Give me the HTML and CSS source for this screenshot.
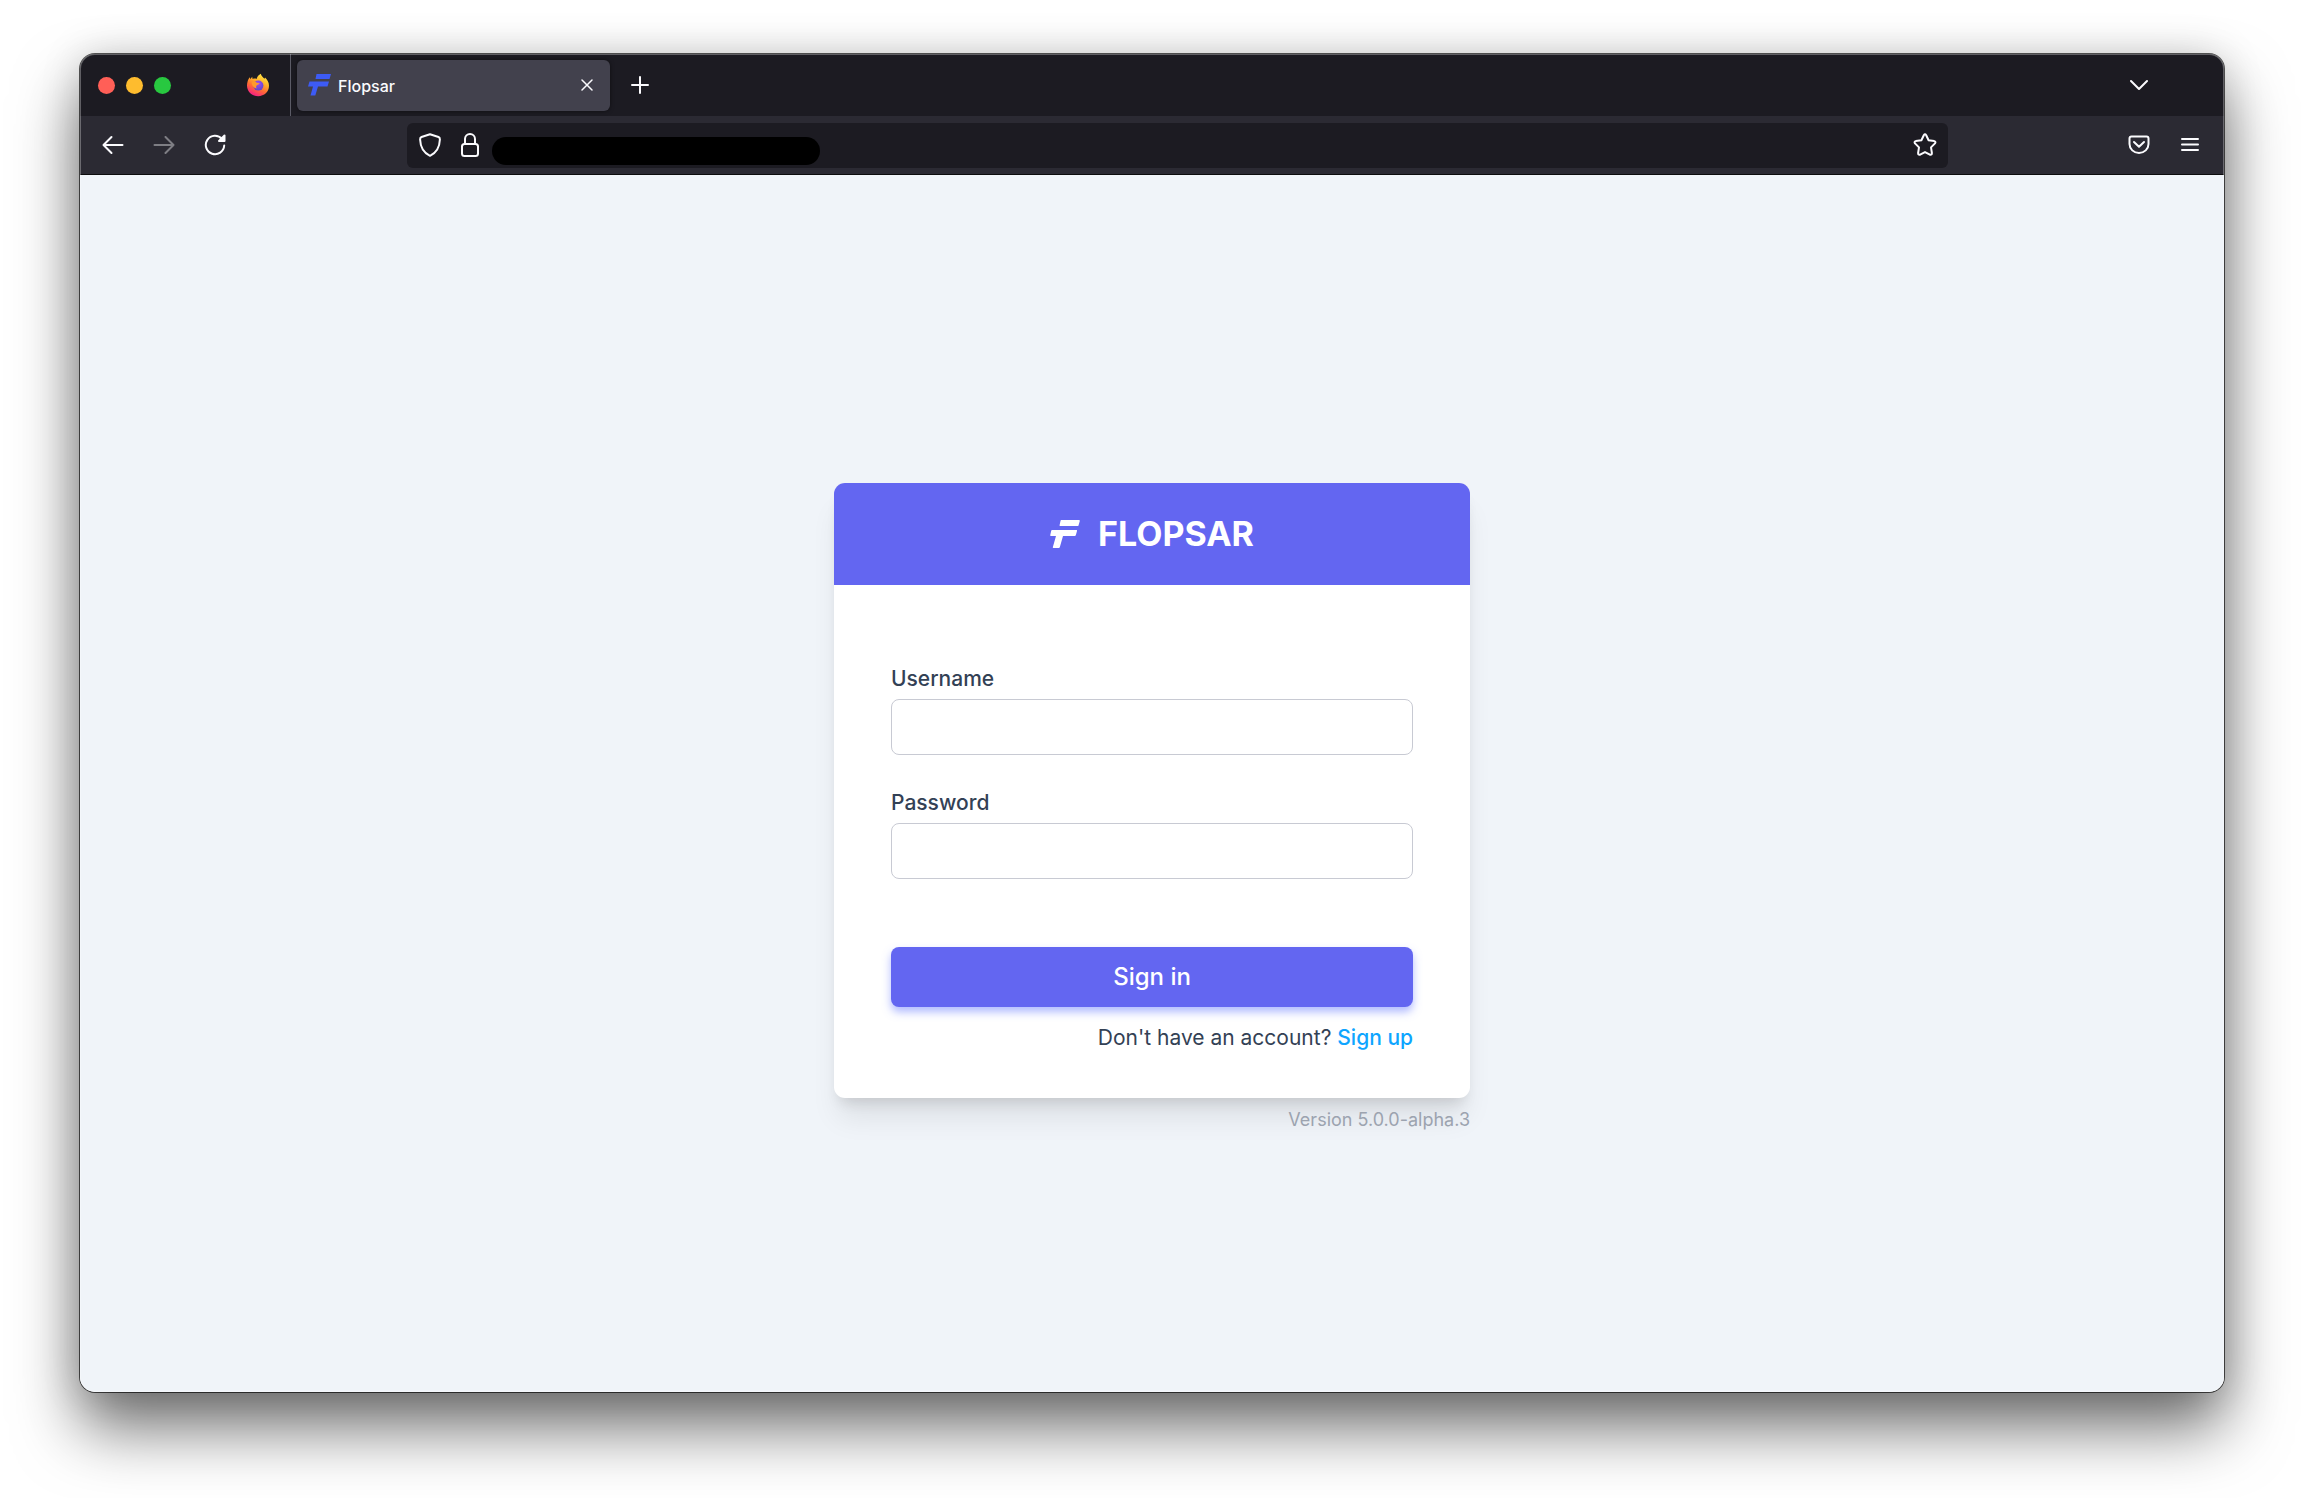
FILE: index.html
```html
<!DOCTYPE html>
<html lang="en">
<head>
<meta charset="utf-8">
<meta name="viewport" content="width=device-width, initial-scale=1">
<title>Flopsar</title>
<link rel="stylesheet" href="styles.css">
</head>
<body>
<div class="window">
  <header class="tabbar">
    <div class="lights">
      <button class="light light-close" aria-label="Close window"></button>
      <button class="light light-min" aria-label="Minimize window"></button>
      <button class="light light-zoom" aria-label="Zoom window"></button>
    </div>
    <button class="icon-button pinned" aria-label="Firefox View">
      <svg width="24" height="24" viewBox="0 0 24 24">
        <defs>
          <linearGradient id="flame" x1="0.8" y1="0" x2="0.3" y2="1">
            <stop offset="0" stop-color="#fff04a"/>
            <stop offset="0.35" stop-color="#ffb529"/>
            <stop offset="0.65" stop-color="#ff6a35"/>
            <stop offset="1" stop-color="#f5198a"/>
          </linearGradient>
          <radialGradient id="globe" cx="0.5" cy="0.3" r="0.7">
            <stop offset="0" stop-color="#a04cf0"/>
            <stop offset="1" stop-color="#5b46c9"/>
          </radialGradient>
        </defs>
        <path fill="url(#flame)" d="M1.6 8.6 C2 6.6 3 5 4 4.2 L4.2 6.2 L6.2 3.8 L6.6 6 C8 5.4 9.400 5.400 10.600 5.900 C11.200 3.600 12.800 1.800 14.800 .8 C15.200 3.200 17 4.200 18.600 5.800 L19 4.600 C21.400 6.600 23 9.600 23 12.800 C23 18.800 18.200 23.200 12.200 23.200 C6 23.200 1 18.800 1 12.600 C1 11.200 1.200 9.800 1.600 8.600Z"/>
        <circle cx="12.400" cy="12.600" r="5" fill="url(#globe)"/>
        <path fill="#ff9a2b" d="M5.600 9.400 C7.400 7.800 9.600 8.400 10.800 9.800 L13.600 10.200 C13.200 11.600 11.400 11.800 10.800 12.200 C9.800 13.200 10 14.400 10.800 15.600 C7.400 15 6 12.400 5.600 9.400Z"/>
      </svg>
    </button>
    <div class="tab">
      <svg class="favicon" width="24" height="24" viewBox="0 0 24 24" fill="#3d5bf5"><path d="M8.500 1H23L21.500 6H7.500ZM1.500 8.500H21L19.500 13.500H10L7.300 22.500H2.500L5 13.500H0Z"/></svg>
      <span class="tab-title">Flopsar</span>
      <button class="icon-button" aria-label="Close tab">
        <svg width="12" height="12" viewBox="0 0 12 12" class="stroke thin"><path d="M1 1 11 11M11 1 1 11"/></svg>
      </button>
    </div>
    <button class="icon-button new-tab" aria-label="New tab">
      <svg width="18" height="18" viewBox="0 0 18 18" class="stroke"><path d="M9 1V17M1 9H17"/></svg>
    </button>
    <button class="icon-button all-tabs" aria-label="List all tabs">
      <svg width="18" height="18" viewBox="0 0 18 18" class="stroke"><path d="M1 5 9 13 17 5"/></svg>
    </button>
  </header>

  <nav class="toolbar" aria-label="Navigation">
    <div class="nav-buttons">
      <button class="icon-button" aria-label="Back">
        <svg width="22" height="22" viewBox="0 0 22 22" class="stroke"><path d="M20.500 11H1.500M9.500 3 1.500 11 9.500 19"/></svg>
      </button>
      <button class="icon-button" aria-label="Forward" disabled>
        <svg width="22" height="22" viewBox="0 0 22 22" class="stroke"><path d="M1.500 11H20.500M12.500 3 20.500 11 12.500 19"/></svg>
      </button>
      <button class="icon-button" aria-label="Reload">
        <svg width="22" height="22" viewBox="0 0 22 22" class="stroke"><path d="M18 5A9.200 9.200 0 1 0 20.200 11.500"/><path d="M20.500 1.500V7H15Z" fill="#fbfbfe"/></svg>
      </button>
    </div>
    <div class="urlbar">
      <svg width="24" height="24" viewBox="0 0 24 24" class="stroke"><path d="M12 1.200 20.500 4Q22 4.600 21.900 6.500C21.600 14.500 18 20 12 22.800C6 20 2.400 14.500 2.100 6.500Q2 4.600 3.500 4Z"/></svg>
      <svg width="24" height="24" viewBox="0 0 24 24" class="stroke"><rect x="4" y="11" width="16" height="12" rx="2.500"/><path d="M7 11V6A5 5 0 0 1 17 6V11"/></svg>
      <input class="address" type="text" aria-label="Address">
      <button class="icon-button bookmark" aria-label="Bookmark this page">
        <svg width="24" height="24" viewBox="0 0 24 24" class="stroke"><path d="M10.800 2.200Q12 .4 13.200 2.200L15.600 7.300 21.200 8.100Q23.200 8.700 22 10.400L18 14.400 18.900 20Q18.900 22.300 16.900 21.700L12 19.100 7.100 21.700Q5.100 22.300 5.100 20L6 14.400 2 10.400Q.8 8.700 2.800 8.100L8.400 7.300Z"/></svg>
      </button>
    </div>
    <div class="tools">
      <button class="icon-button" aria-label="Save to Pocket">
        <svg width="22" height="22" viewBox="0 0 22 22" class="stroke"><path d="M3.500 2.500H18.500Q20.500 2.500 20.500 4.500V10A9.500 9 0 0 1 1.500 10V4.500Q1.500 2.500 3.500 2.500ZM6 8 11 12.800 16 8"/></svg>
      </button>
      <button class="icon-button" aria-label="Open menu">
        <svg width="22" height="22" viewBox="0 0 22 22" class="stroke"><path d="M3 5H19M3 10.500H19M3 16H19"/></svg>
      </button>
    </div>
  </nav>

  <main class="page">
    <div class="login">
      <section class="card">
        <h1 class="brand">
          <svg width="30" height="30" viewBox="0 0 30 30" fill="#fff"><path d="M11 1H29Q30 1 29.800 2L28.500 6.500Q28.300 7 27.500 7H10Q9.400 7 9.600 6L10.600 1.500ZM2 11H26.500Q27.300 11 27 12L25.800 16.200Q25.500 17 24.800 17H13L9.800 28.300Q9.500 29 8.800 29H3.500Q2.600 29 2.800 28.200L6 17H1Q0 17 .2 16.200L1.200 11.800Q1.400 11 2 11Z"/></svg>
          <span>FLOPSAR</span>
        </h1>
        <form class="form">
          <label class="label" for="username">Username</label>
          <input class="field" id="username" type="text" autocomplete="username">
          <label class="label" for="password">Password</label>
          <input class="field" id="password" type="password" autocomplete="current-password">
          <button class="submit" type="submit">Sign in</button>
          <p class="signup">Don't have an account? <a href="#signup">Sign up</a></p>
        </form>
      </section>
      <p class="version">Version 5.0.0-alpha.3</p>
    </div>
  </main>
</div>
</body>
</html>
```
FILE: styles.css
```css
* {
  box-sizing: border-box;
}

body {
  margin: 0;
  min-height: 100vh;
  padding: 54px 80px 106px;
  display: flex;
  background: #fff;
  font-family: Inter, "Open Sans", sans-serif;
}

h1,
p {
  margin: 0;
}

button {
  font-family: inherit;
  cursor: pointer;
}

.window {
  position: relative;
  flex: 1;
  display: flex;
  flex-direction: column;
  min-width: 0;
  border-radius: 15px;
  overflow: hidden;
  box-shadow: 0 0 0 1px rgba(0, 0, 0, 0.65), 0 0 40px rgba(0, 0, 0, 0.15), 0 36px 64px rgba(0, 0, 0, 0.56);
}

.window::after {
  content: "";
  position: absolute;
  inset: 0;
  border-radius: inherit;
  box-shadow: inset 0 0 0 1px rgba(255, 255, 255, 0.3);
  pointer-events: none;
}

.stroke {
  fill: none;
  stroke: #fbfbfe;
  stroke-width: 2;
  stroke-linecap: round;
  stroke-linejoin: round;
}

.thin {
  stroke-width: 1.5;
}

.icon-button {
  display: flex;
  padding: 0;
  border: 0;
  background: none;
}

.icon-button:disabled {
  opacity: 0.4;
}

.tabbar {
  display: flex;
  align-items: center;
  height: 62px;
  padding: 0 76px 0 18px;
  background: #1c1b22;
}

.lights {
  display: flex;
  gap: 11px;
}

.light {
  width: 17px;
  height: 17px;
  padding: 0;
  border: 0;
  border-radius: 50%;
}

.light-close {
  background: #ff5f57;
}

.light-min {
  background: #febc2e;
}

.light-zoom {
  background: #28c840;
}

.pinned {
  align-items: center;
  align-self: stretch;
  margin-left: 75px;
  padding-right: 20px;
  border-right: 1px solid #5b5b66;
}

.tab {
  display: flex;
  align-items: center;
  width: 313px;
  height: 51px;
  margin-left: 6px;
  padding: 0 17px 0 11px;
  border-radius: 6px;
  background: #42414d;
  box-shadow: 0 0 4px rgba(0, 0, 0, 0.5);
}

.tab-title {
  flex: 1;
  margin-left: 6px;
  padding-top: 2px;
  color: #fbfbfe;
  font-size: 16px;
  font-weight: 500;
  line-height: 20px;
}

.new-tab {
  margin-left: 21px;
}

.all-tabs {
  margin-left: auto;
}

.toolbar {
  display: flex;
  align-items: center;
  height: 59px;
  padding: 0 23px 0 22px;
  border-bottom: 1px solid #0c0c0d;
  background: #2b2a33;
}

.nav-buttons,
.tools {
  display: flex;
  gap: 29px;
}

.urlbar {
  flex: 1;
  display: flex;
  align-items: center;
  gap: 16px;
  height: 45px;
  margin: 0 180px 0 181px;
  padding: 0 11px;
  border-radius: 6px;
  background: #1c1b22;
}

.address {
  width: 328px;
  height: 28px;
  margin: 12px 0 0 -6px;
  padding: 0 14px;
  border: 0;
  border-radius: 14px;
  background: #000;
  color: #fbfbfe;
  font-size: 16px;
}

.bookmark {
  margin-left: auto;
}

.page {
  flex: 1;
  display: flex;
  flex-direction: column;
  align-items: center;
  justify-content: center;
  padding-top: 48px;
  background: #f0f4f9;
}

.login {
  width: 636px;
  max-width: 100%;
}

.card {
  border-radius: 11px;
  background: #fff;
  box-shadow: 0 24px 28px -4px rgba(0, 0, 0, 0.08), 0 10px 14px -6px rgba(0, 0, 0, 0.12);
}

.brand {
  display: flex;
  align-items: center;
  justify-content: center;
  gap: 18px;
  height: 102px;
  border-radius: 11px 11px 0 0;
  background: #6366f1;
  color: #fff;
  font-size: 34px;
  font-weight: 700;
  line-height: 40px;
}

.form {
  display: flex;
  flex-direction: column;
  padding: 80px 57px 46px;
}

.label {
  margin-bottom: 6px;
  color: #334155;
  font-size: 21px;
  font-weight: 500;
  line-height: 28px;
}

.field {
  height: 56px;
  margin-bottom: 34px;
  padding: 0 16px;
  border: 1px solid #c8cad3;
  border-radius: 8px;
  background: #fff;
  font: inherit;
  font-size: 21px;
}

.submit {
  height: 60px;
  margin-top: 34px;
  border: 0;
  border-radius: 8px;
  background: #6366f1;
  box-shadow: 0 5px 8px rgba(99, 120, 255, 0.5);
  color: #fff;
  font-size: 24px;
  font-weight: 500;
}

.signup {
  margin-top: 17px;
  color: #334155;
  font-size: 21px;
  line-height: 28px;
  text-align: right;
}

.signup a {
  color: #0ea5ff;
  font-weight: 500;
  text-decoration: none;
}

.version {
  margin-top: 9px;
  color: #9ca3af;
  font-size: 18px;
  line-height: 26px;
  text-align: right;
}
```
